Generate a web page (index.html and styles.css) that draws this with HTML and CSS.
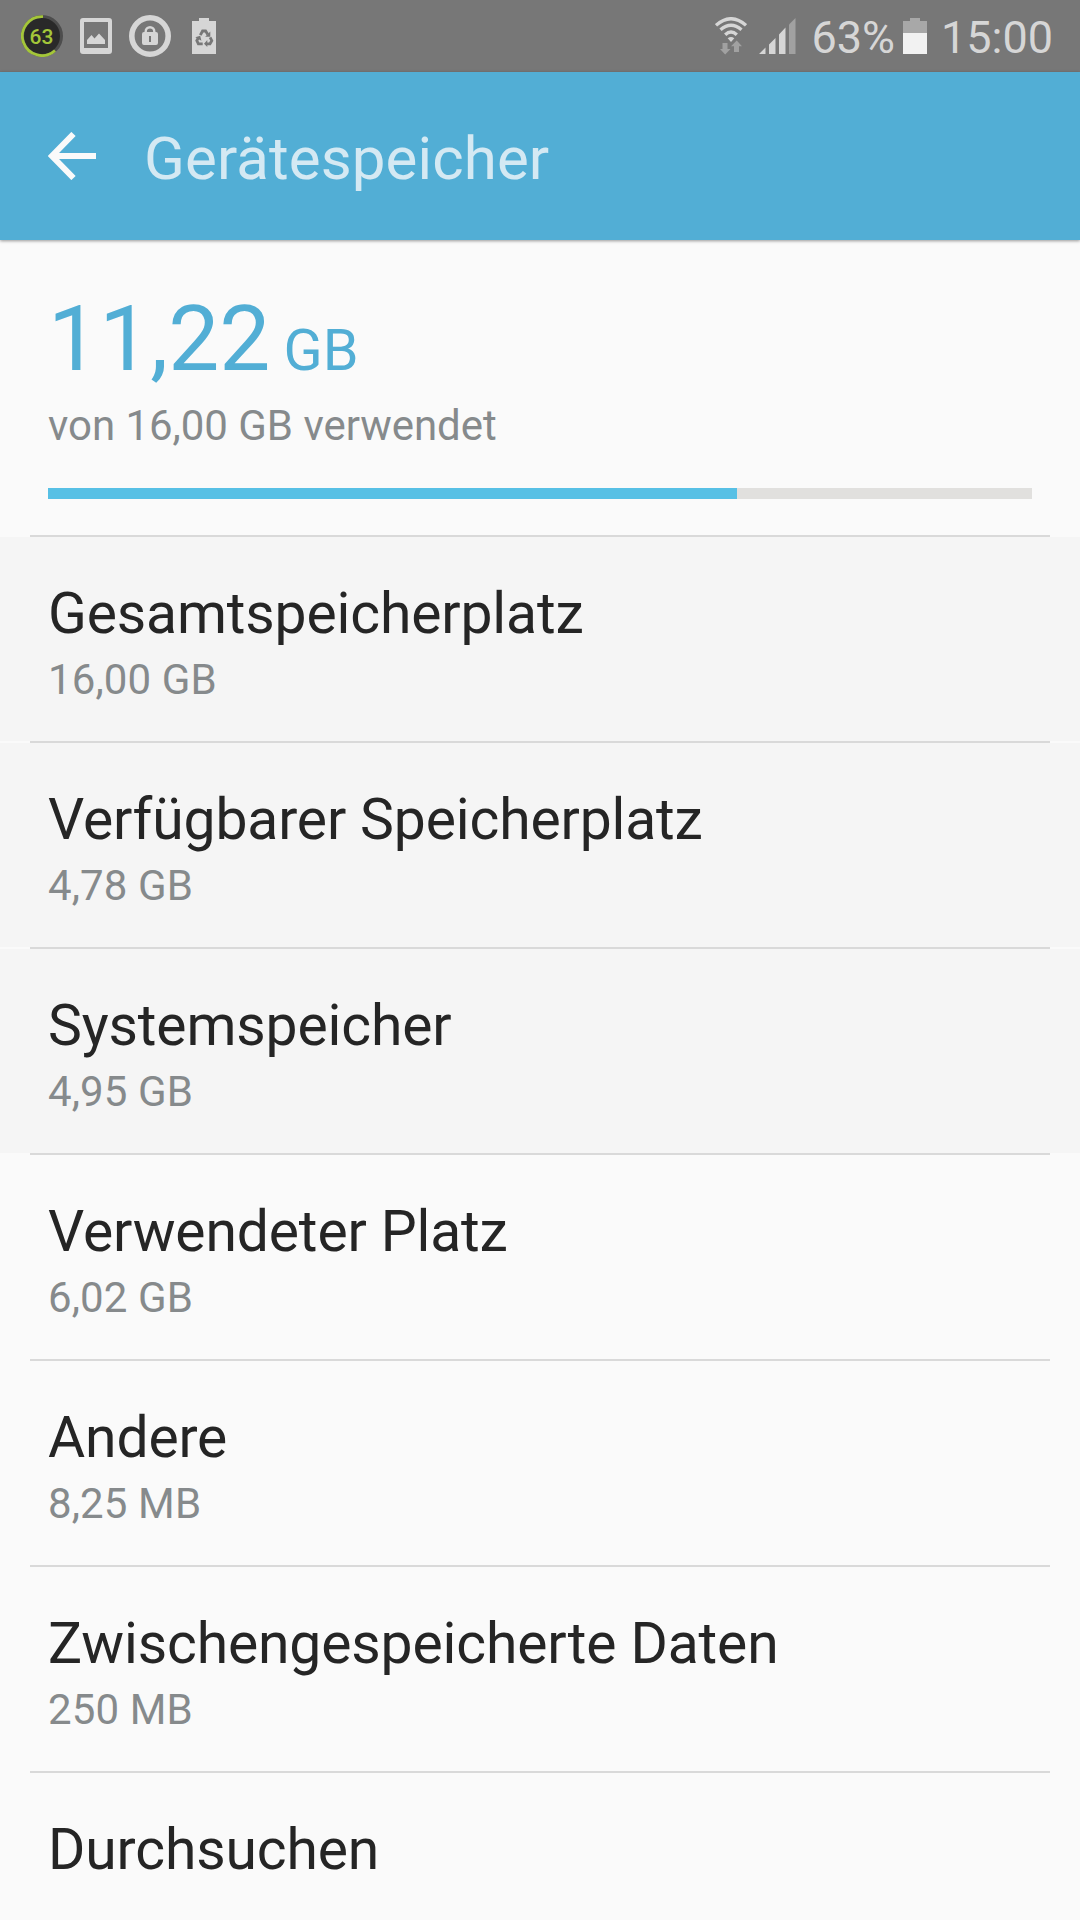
FILE: index.html
```html
<!DOCTYPE html>
<html lang="de">
<head>
<meta charset="utf-8">
<title>Gerätespeicher</title>
<link rel="stylesheet" href="styles.css">
</head>
<body>
<div class="status-bar">
  <div class="status-left">
    <svg class="icon" width="42" height="42" viewBox="0 0 42 42">
      <circle cx="21" cy="21" r="19.5" fill="#292929" stroke="#4d4d4d" stroke-width="3"/>
      <path d="M22 1.6A19.5 19.5 0 1 0 34 35.5" fill="none" stroke="#a4c639" stroke-width="2.8"/>
      <text class="badge-text" x="20.5" y="28.500" text-anchor="middle">63</text>
    </svg>
    <svg class="icon icon-image" width="32" height="36" viewBox="0 0 32 36">
      <path fill="#d6d6d6" fill-rule="evenodd" d="M3 0H29Q32 0 32 3V33Q32 36 29 36H3Q0 36 0 33V3Q0 0 3 0ZM4 4V30H28V4Z"/>
      <path fill="#d6d6d6" d="M7 26V22L11.500 17L14.500 20.500L19 15.500L25 22V26Z"/>
    </svg>
    <svg class="icon icon-lock" width="42" height="42" viewBox="0 0 42 42">
      <circle cx="21" cy="21" r="18.200" fill="none" stroke="#d6d6d6" stroke-width="5.600"/>
      <path fill="none" stroke="#d6d6d6" stroke-width="2.400" d="M16.700 20V16.500A4.300 4.300 0 0 1 25.300 16.500V17"/>
      <path fill="#d6d6d6" fill-rule="evenodd" d="M15 17H27Q29 17 29 19V28Q29 30 27 30H15Q13 30 13 28V19Q13 17 15 17ZM20 21V27H22V21Z"/>
    </svg>
    <svg class="icon icon-recycle" width="24" height="36" viewBox="0 0 24 36">
      <path fill="#d6d6d6" d="M0 3H7V0H17V3H24V36H0Z"/>
      <g fill="none" stroke="#777" stroke-width="2.800">
        <path d="M8.300 17.200L10.600 13H13.600L15.800 16.600"/>
        <path d="M18.100 19.300L19.800 22.600L18 25.800H14.500"/>
        <path d="M10.700 25.800H6.400L4.800 22.600L6.300 20"/>
      </g>
      <path fill="#777" d="M18.300 13.500V18.800H13.200ZM15.300 22V29L12 25.800ZM3.300 19.300L8.200 17.700L9.400 22.700Z"/>
    </svg>
  </div>
  <div class="status-right">
    <svg class="icon" width="32" height="38" viewBox="0 0 32 38">
      <g fill="none" stroke="#d6d6d6" stroke-width="3.400">
        <path d="M1 8.300Q16 -4.800 31 8.300"/>
        <path d="M5.500 12.800Q16 3.800 26.500 12.800"/>
        <path d="M10.200 17.700Q16 12.300 21.800 17.700"/>
      </g>
      <path fill="#d6d6d6" d="M12.700 21.200Q16 18.800 19.300 21.200L16 25Z"/>
      <path fill="#a1a1a1" d="M7.500 26H12.500V32H15.500L10.200 37.500L5 32H7.500ZM19 35V29.200H16L21.700 23.500L27 29.200H24V35Z"/>
    </svg>
    <svg class="icon icon-signal" width="37" height="36" viewBox="0 0 37 36">
      <path fill="#d6d6d6" d="M0 36L6.500 29.500V36ZM10 26.500L16.500 20V36H10ZM20 16.500L26.500 9.500V36H20Z"/>
      <path fill="#a1a1a1" d="M30 6.500L36.500 0V36H30Z"/>
    </svg>
    <span class="percent">63%</span>
    <svg class="icon icon-battery" width="24" height="36" viewBox="0 0 24 36">
      <path fill="#a8a8a8" d="M0 3H7V0H17V3H24V15H0Z"/>
      <path fill="#f2f2f2" d="M0 15H24V36H0Z"/>
    </svg>
    <span class="clock">15:00</span>
  </div>
</div>
<header class="app-bar">
  <svg class="back" width="48" height="48" viewBox="0 0 48 48">
    <path fill="none" stroke="#fafafa" stroke-width="6" d="M25.500 2L4 24L25.500 46M4 24H48"/>
  </svg>
  <h1 class="title">Gerätespeicher</h1>
</header>
<main>
  <section class="summary">
    <div class="used"><span class="amount">11,22</span><span class="unit">GB</span></div>
    <div class="total">von 16,00 GB verwendet</div>
    <div class="meter"><div class="meter-fill"></div></div>
  </section>
  <ul class="list">
    <li class="row"><div class="body shaded"><div class="name">Gesamtspeicherplatz</div><div class="value">16,00 GB</div></div></li>
    <li class="row"><div class="body shaded"><div class="name">Verfügbarer Speicherplatz</div><div class="value">4,78 GB</div></div></li>
    <li class="row"><div class="body shaded"><div class="name">Systemspeicher</div><div class="value">4,95 GB</div></div></li>
    <li class="row"><div class="body"><div class="name">Verwendeter Platz</div><div class="value">6,02 GB</div></div></li>
    <li class="row"><div class="body"><div class="name">Andere</div><div class="value">8,25 MB</div></div></li>
    <li class="row"><div class="body"><div class="name">Zwischengespeicherte Daten</div><div class="value">250 MB</div></div></li>
    <li class="row"><div class="body"><div class="name">Durchsuchen</div></div></li>
  </ul>
</main>
</body>
</html>
```

FILE: styles.css
```css
* { box-sizing: border-box; }

body {
  margin: 0;
  height: 1920px;
  overflow: hidden;
  background: #fafafa;
  color: #252525;
  font-family: Roboto, sans-serif;
}

.icon, .back { display: block; flex: none; }

.status-bar {
  display: flex;
  justify-content: space-between;
  height: 72px;
  padding: 0 27px 0 21px;
  background: #777;
  color: #d6d6d6;
  font-size: 45px;
  line-height: 72px;
}

.status-left, .status-right { display: flex; align-items: center; height: 72px; }
.badge-text { fill: #a4c639; font: 500 21px Roboto, sans-serif; }
.icon-image { margin-left: 17px; }
.icon-lock { margin-left: 17px; }
.icon-recycle { margin-left: 21px; }
.icon-signal { margin-left: 12px; }
.percent { margin-left: 15px; padding-top: 3px; }
.icon-battery { margin-left: 8px; }
.clock { margin-left: 14px; padding-top: 3px; }

.app-bar {
  display: flex;
  align-items: center;
  height: 168px;
  padding-left: 48px;
  background: #52aed5;
  box-shadow: 0 1px 3px rgba(0, 0, 0, 0.4);
}

.title {
  margin: 5px 0 0 48px;
  color: #d4e9f3;
  font-size: 60px;
  font-weight: 400;
  letter-spacing: 0.12px;
  line-height: 70px;
}

.summary {
  height: 295px;
  padding: 45px 48px 0;
}

.used {
  display: flex;
  align-items: baseline;
  height: 108px;
  line-height: 108px;
  color: #52aed5;
}

.amount { font-size: 91px; }
.unit { margin-left: 13px; font-size: 57.5px; }

.total {
  margin-top: 8px;
  color: #868a8c;
  font-size: 42px;
  letter-spacing: -0.04px;
  line-height: 50px;
}

.meter { height: 11px; margin-top: 37px; background: #e1e0de; }
.meter-fill { width: 689px; height: 11px; background: #57c0e5; }

.list { margin: 0; padding: 0; list-style: none; }
.row { height: 206px; }
.row::before { content: ""; display: block; height: 2px; margin: 0 30px; background: #d9d9d9; }
.body { height: 204px; padding: 43px 48px 0; }
.shaded { background: #f5f5f5; }
.name { font-size: 57px; letter-spacing: -0.14px; line-height: 67px; }
.value { margin-top: 8px; color: #868a8c; font-size: 42px; letter-spacing: 0.12px; line-height: 50px; }
```
